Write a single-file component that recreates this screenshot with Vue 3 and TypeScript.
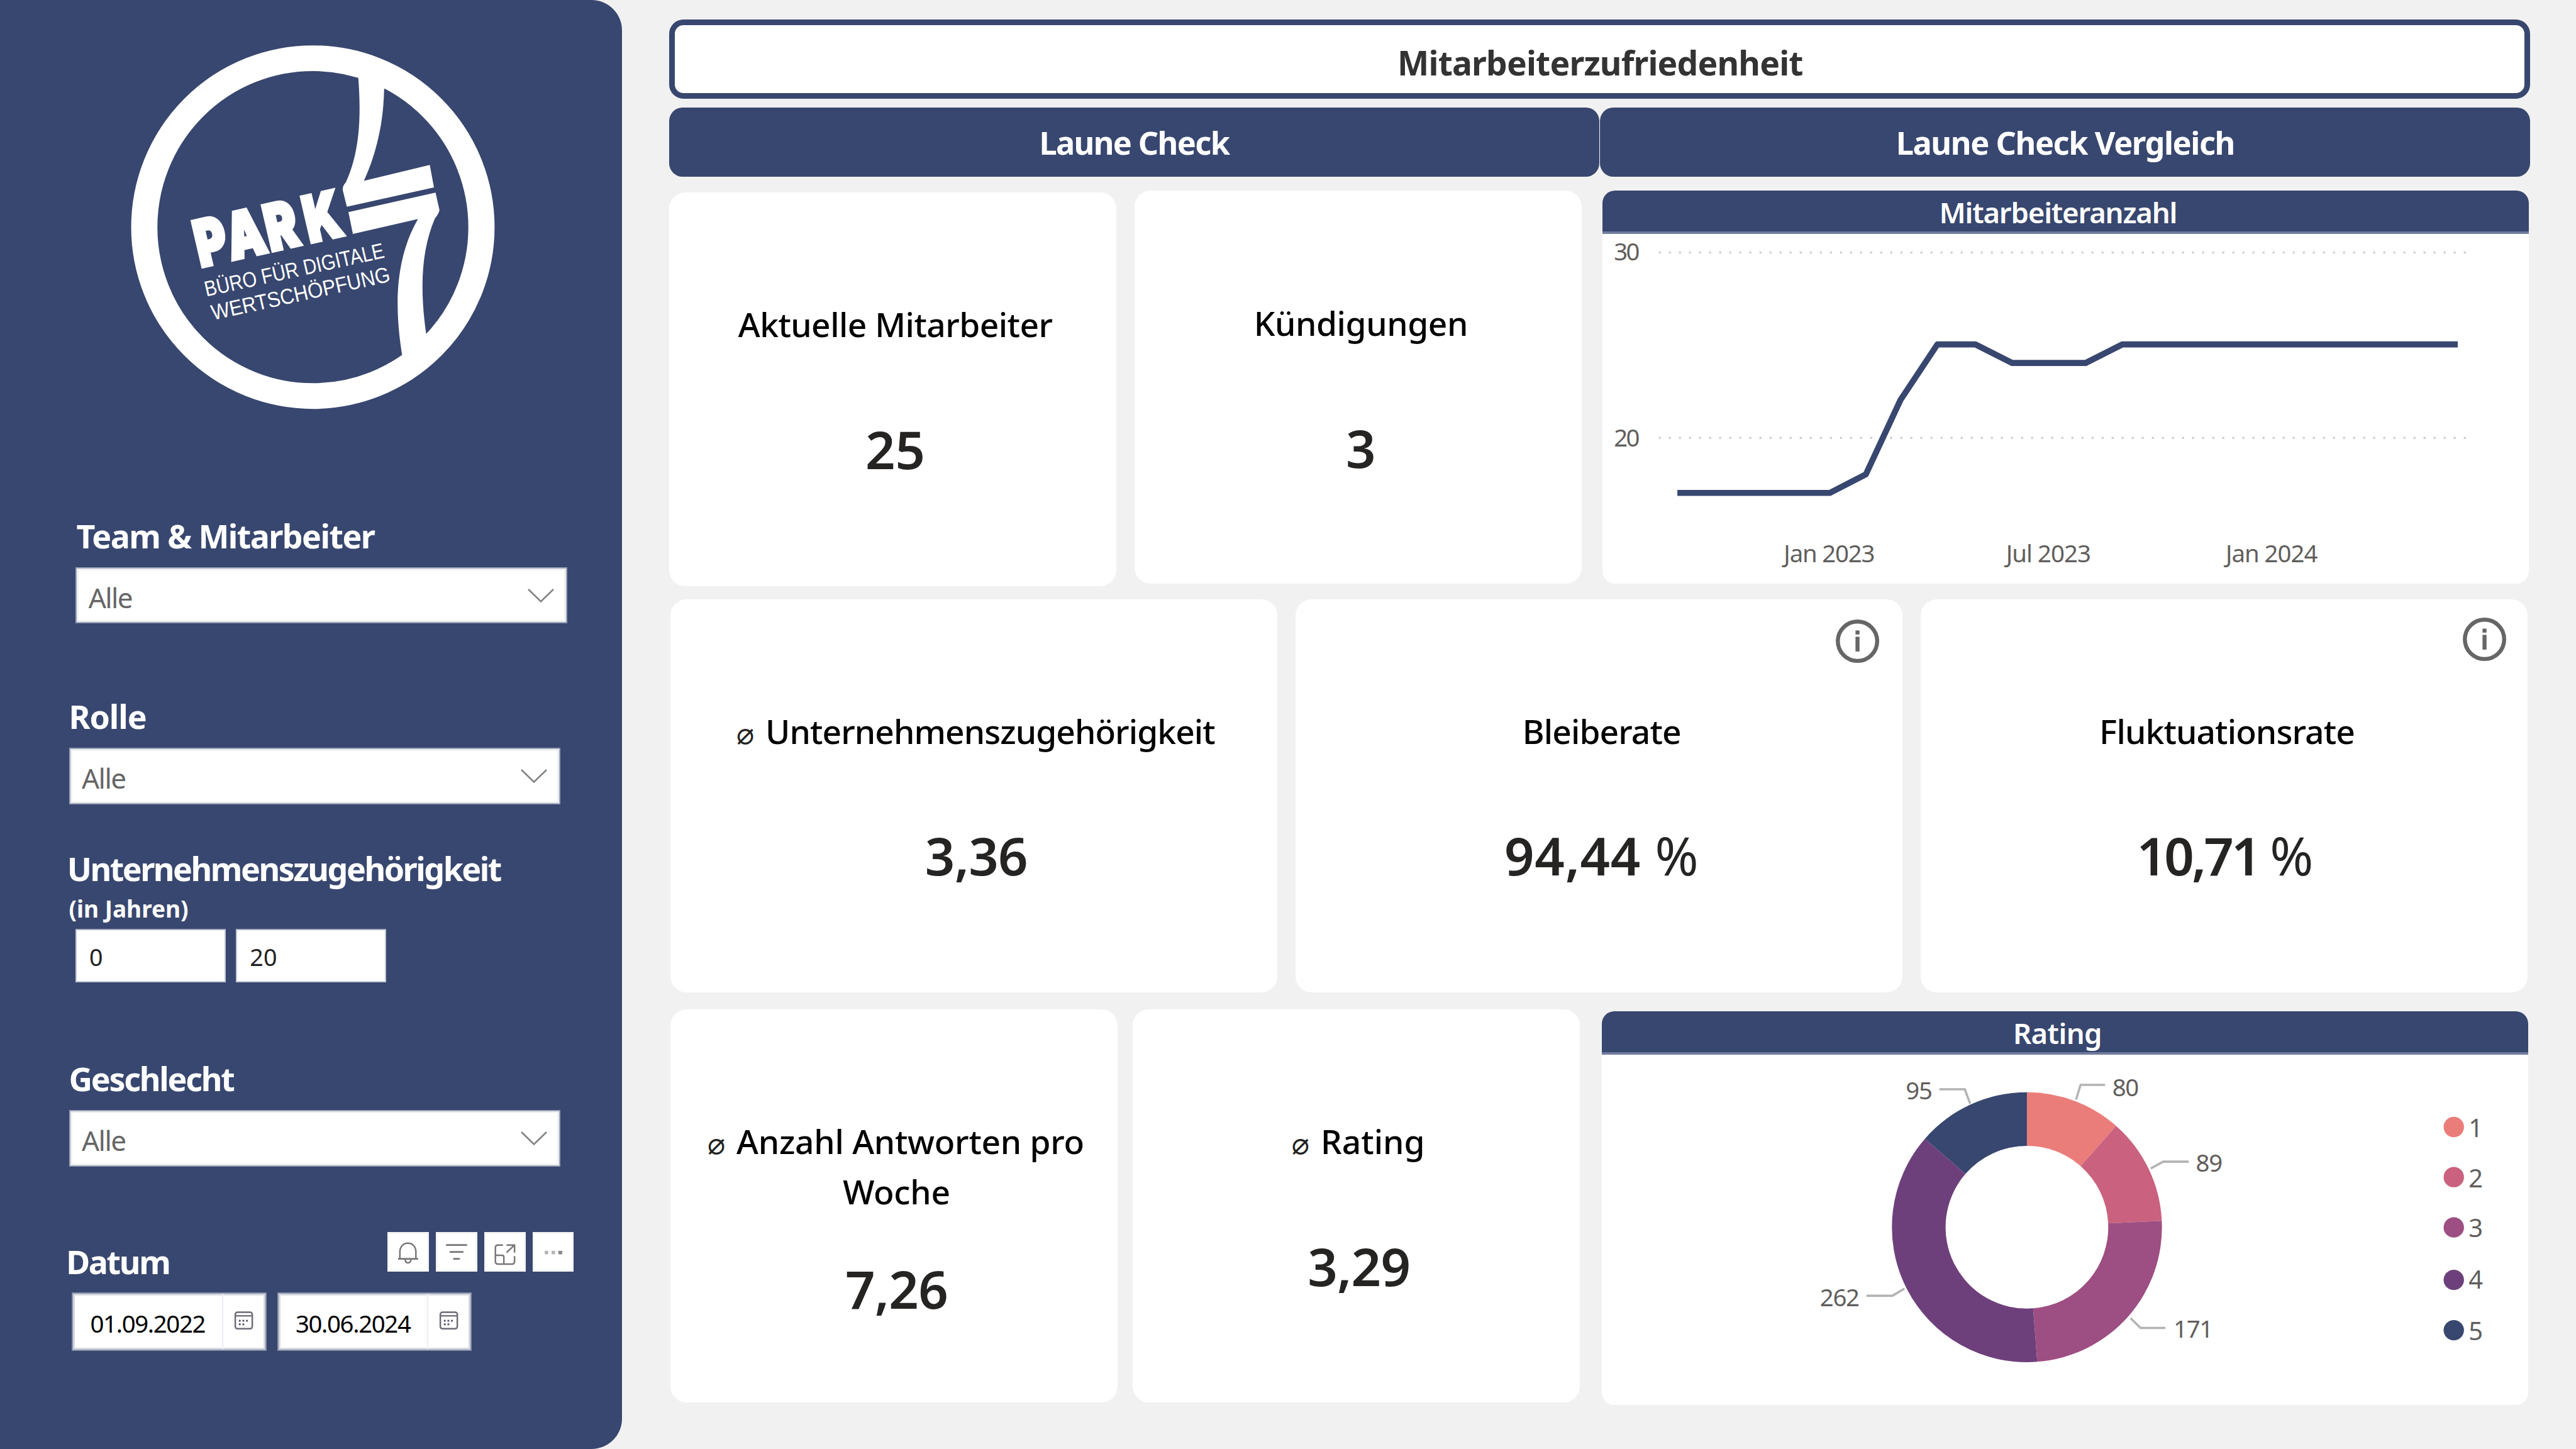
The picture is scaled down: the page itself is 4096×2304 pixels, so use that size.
<script setup lang="ts">
interface Kpi {
  label: string[]
  value: string
  unit?: string
  avg?: boolean
  info?: boolean
  cls: string
}

const rowOne: Kpi[] = [
  { label: ['Aktuelle Mitarbeiter'], value: '25', cls: 'staff' },
  { label: ['Kündigungen'], value: '3', cls: 'quits' },
]
const rowTwo: Kpi[] = [
  { label: ['Unternehmenszugehörigkeit'], value: '3,36', avg: true, cls: 'tenure' },
  { label: ['Bleiberate'], value: '94,44', unit: '%', info: true, cls: 'stay' },
  { label: ['Fluktuationsrate'], value: '10,71', unit: '%', info: true, cls: 'churn' },
]
const rowThree: Kpi[] = [
  { label: ['Anzahl Antworten pro', 'Woche'], value: '7,26', avg: true, cls: 'answers' },
  { label: ['Rating'], value: '3,29', avg: true, cls: 'score' },
]

const linePoints =
  '3750,1102 4091,1102 4171.5,1060.5 4249,894 4331.4,770 4416.4,770 4498.5,811.5 4663,811.5 4745,770 5495,770'

interface Slice {
  name: string
  count: number
  color: string
}
const slices: Slice[] = [
  { name: '1', count: 80, color: '#ea7d7a' },
  { name: '2', count: 89, color: '#c9617f' },
  { name: '3', count: 171, color: '#9d4e82' },
  { name: '4', count: 262, color: '#6e407b' },
  { name: '5', count: 95, color: '#38476f' },
]
const legendY = [2520.5, 2632.5, 2745, 2862.5, 2975]
const legendText = [2543, 2655, 2767, 2882, 2998]

const cx = 4533
const cy = 2744.6
const rOut = 302
const rIn = 182
const total = slices.reduce((s, d) => s + d.count, 0)

function point(r: number, a: number): string {
  return `${(cx + r * Math.sin(a)).toFixed(1)} ${(cy - r * Math.cos(a)).toFixed(1)}`
}
let run = 0
const arcs = slices.map((s) => {
  const a = (run / total) * Math.PI * 2
  run += s.count
  const b = (run / total) * Math.PI * 2
  const big = b - a > Math.PI ? 1 : 0
  return {
    color: s.color,
    d: `M${point(rOut, a)} A${rOut} ${rOut} 0 ${big} 1 ${point(rOut, b)} L${point(rIn, b)} A${rIn} ${rIn} 0 ${big} 0 ${point(rIn, a)} Z`,
  }
})

const callouts = [
  { text: '80', x: 4724, y: 2451, line: '4643,2459 4653,2426 4708,2426' },
  { text: '89', x: 4911, y: 2621, line: '4810,2613 4838,2598 4895,2598' },
  { text: '171', x: 4861, y: 2992, line: '4765,2948 4787,2970 4843,2970' },
  { text: '262', x: 4070, y: 2922, line: '4259,2882 4232,2898 4174,2898' },
  { text: '95', x: 4262, y: 2459, line: '4406,2468 4394,2436 4337,2436' },
]
</script>

<template>
  <div class="page">
    <aside class="side">
      <svg class="logo" viewBox="0 0 1568 1568" preserveAspectRatio="none">
        <ellipse cx="782.5" cy="779.5" rx="642.5" ry="658" fill="none" stroke="#fff" stroke-width="100" />
        <g fill="#fff">
          <path d="M955 190C966 330 965 480 908 605Q896 618 896 634L912 700L1244 625L1228 537L977 599C1030 480 1052 360 1054 242L1100 200L1000 150Z" />
          <path d="M918 721L1250 645L1265 713Q1262 728 1248 745C1195 870 1190 1020 1214 1194L1240 1230L1150 1300L1122 1275C1092 1080 1098 900 1183 748L935 806Z" />
          <text class="park" transform="translate(356 934) rotate(-12.8) scale(0.74 1)" x="-3 163 368 574">PARK</text>
          <text class="claim" transform="translate(376 1050) rotate(-12.6)" textLength="700" lengthAdjust="spacingAndGlyphs">BÜRO FÜR DIGITALE</text>
          <text class="claim" transform="translate(402 1142) rotate(-12.6)" textLength="696" lengthAdjust="spacingAndGlyphs">WERTSCHÖPFUNG</text>
        </g>
      </svg>

      <section class="field team">
        <h3>Team &amp; Mitarbeiter</h3>
        <div class="drop">
          <span>Alle</span>
          <svg viewBox="0 0 64 36"><path d="M3 3L32 31L61 3" /></svg>
        </div>
      </section>
      <section class="field role">
        <h3>Rolle</h3>
        <div class="drop">
          <span>Alle</span>
          <svg viewBox="0 0 64 36"><path d="M3 3L32 31L61 3" /></svg>
        </div>
      </section>
      <section class="field years">
        <h3>Unternehmenszugehörigkeit</h3>
        <h4>(in Jahren)</h4>
        <div class="range">
          <div class="num">0</div>
          <div class="num">20</div>
        </div>
      </section>
      <section class="field gender">
        <h3>Geschlecht</h3>
        <div class="drop">
          <span>Alle</span>
          <svg viewBox="0 0 64 36"><path d="M3 3L32 31L61 3" /></svg>
        </div>
      </section>
      <section class="field dates">
        <div class="head">
          <h3>Datum</h3>
          <div class="tools">
            <div class="tool">
              <svg viewBox="0 0 93 89">
                <path d="M28 60V45C28 33 35 25 46 25S64 33 64 45V60" />
                <path d="M24 60H69" stroke-width="4" />
                <path d="M40 61Q40 69 46 69T53 61" />
              </svg>
            </div>
            <div class="tool">
              <svg viewBox="0 0 93 89">
                <path d="M23 29H70M31 44.500H62M39 60H54" stroke-width="4" />
              </svg>
            </div>
            <div class="tool">
              <svg viewBox="0 0 93 89">
                <path d="M42 29H31Q25 29 25 35V66Q25 72 31 72H62Q68 72 68 66V54" />
                <path d="M50 29H68V46M67 30L50 46M25 52H40Q44 52 44 56V72" />
              </svg>
            </div>
            <div class="tool">
              <svg viewBox="0 0 93 89">
                <g fill="#8a8a8a" stroke="none">
                  <rect x="27" y="42" width="8" height="8" rx="2" fill="#b5b5b5" />
                  <rect x="42.500" y="42" width="8" height="8" rx="2" fill="#b5b5b5" />
                  <rect x="57.500" y="42" width="9" height="8" rx="2" />
                </g>
              </svg>
            </div>
          </div>
        </div>
        <div class="range">
          <div v-for="d in ['01.09.2022', '30.06.2024']" :key="d" class="date">
            <span>{{ d }}</span>
            <div class="cal">
              <svg viewBox="0 0 44 46">
                <rect x="3" y="5" width="38" height="37" rx="5" fill="none" stroke="#6b6b78" stroke-width="3.500" />
                <path d="M4 13H40" stroke="#77777f" stroke-width="3.500" />
                <g fill="#55506c">
                  <rect x="11" y="22" width="4" height="4" />
                  <rect x="19" y="22" width="4" height="4" />
                  <rect x="27" y="22" width="4" height="4" />
                  <rect x="11" y="30" width="4" height="4" />
                  <rect x="19" y="30" width="4" height="4" />
                </g>
              </svg>
            </div>
          </div>
        </div>
      </section>
    </aside>

    <main class="main">
      <h1 class="title">Mitarbeiterzufriedenheit</h1>
      <nav class="bars">
        <div class="bar">Laune Check</div>
        <div class="bar wide">Laune Check Vergleich</div>
      </nav>

      <div class="row one">
        <article v-for="k in rowOne" :key="k.cls" class="card" :class="k.cls">
          <div class="label"><div v-for="l in k.label" :key="l">{{ l }}</div></div>
          <div class="value">{{ k.value }}</div>
        </article>
        <article class="panel">
          <h2>Mitarbeiteranzahl</h2>
          <svg class="chart" viewBox="3582.500 523 2072.500 782">
            <g stroke="#d0cfce" stroke-width="5" stroke-dasharray="4.500 18">
              <path d="M3708.500 564.500H5519" />
              <path d="M3708.500 979H5519" />
            </g>
            <g class="axis">
              <text x="3608" y="582" textLength="58">30</text>
              <text x="3608" y="998" textLength="58">20</text>
              <text x="3988" y="1257" textLength="204">Jan 2023</text>
              <text x="4485" y="1257" textLength="190">Jul 2023</text>
              <text x="4976" y="1257" textLength="206">Jan 2024</text>
            </g>
            <polyline :points="linePoints" fill="none" stroke="#38476f" stroke-width="13.500" stroke-linejoin="round" />
          </svg>
        </article>
      </div>

      <div class="row two">
        <article v-for="k in rowTwo" :key="k.cls" class="card" :class="k.cls">
          <svg v-if="k.info" class="info" viewBox="0 0 100 100">
            <circle cx="50" cy="50" r="44" fill="none" stroke="#666" stroke-width="9" />
            <rect x="45.500" y="26" width="9" height="9" fill="#666" />
            <rect x="45.500" y="40" width="9" height="33" fill="#666" />
          </svg>
          <div class="label">
            <div v-for="l in k.label" :key="l"><span v-if="k.avg" class="avg">⌀</span>{{ l }}</div>
          </div>
          <div class="value">{{ k.value }}<span v-if="k.unit" class="unit">&nbsp;{{ k.unit }}</span></div>
        </article>
      </div>

      <div class="row three">
        <article v-for="k in rowThree" :key="k.cls" class="card" :class="k.cls">
          <div class="label">
            <div v-for="(l, i) in k.label" :key="l"><span v-if="k.avg && i === 0" class="avg">⌀</span>{{ l }}</div>
          </div>
          <div class="value">{{ k.value }}</div>
        </article>
        <article class="panel rating">
          <h2>Rating</h2>
          <svg class="chart" viewBox="3582.500 2358.600 2072.500 782.400">
            <path v-for="a in arcs" :key="a.color" :d="a.d" :fill="a.color" />
            <g v-for="c in callouts" :key="c.text">
              <polyline :points="c.line" fill="none" stroke="#b3b3b3" stroke-width="5" />
              <text class="tick" :x="c.x" :y="c.y">{{ c.text }}</text>
            </g>
            <g v-for="(s, i) in slices" :key="s.name">
              <circle cx="5488" :cy="legendY[i]" r="22.800" :fill="s.color" />
              <text class="key" x="5521" :y="legendText[i]">{{ s.name }}</text>
            </g>
          </svg>
        </article>
      </div>
    </main>
  </div>
</template>

<style>
html {
  font-size: calc(100vw / 57.6);
}
body {
  margin: 0;
  overflow: hidden;
}
</style>

<style scoped>
.page {
  display: flex;
  width: 57.6rem;
  height: 32.4rem;
  overflow: hidden;
  background: #f1f1f1;
  font-family: 'Noto Sans', 'Open Sans', sans-serif;
  box-sizing: border-box;
}
.page * {
  box-sizing: border-box;
}
h1, h2, h3, h4 {
  margin: 0;
}

/* sidebar */
.side {
  display: flex;
  flex-direction: column;
  flex: none;
  width: 13.91rem;
  height: 32.4rem;
  background: #38476f;
  border-radius: 0 0.68rem 0.68rem 0;
  color: #fff;
}
.logo {
  flex: none;
  width: 9.2rem;
  height: 9rem;
  margin: 0.6rem 0 0 2.4rem;
}
.park {
  font: 900 246px Inter, sans-serif;
  stroke: #fff;
  stroke-width: 15px;
}
.claim {
  font: 400 84px 'Liberation Sans', sans-serif;
}
.field h3 {
  height: 1rem;
  padding-top: 0.025rem;
  font-size: 0.73rem;
  line-height: 1rem;
  font-weight: 700;
  white-space: nowrap;
}
.field h4 {
  font-size: 0.52rem;
  line-height: 0.7rem;
  margin: 0.065rem 0 0.1rem 1.54rem;
  font-weight: 700;
}
.team { margin-top: 1.867rem; }
.team h3 { margin-left: 1.71rem; letter-spacing: -0.0222rem; }
.team .drop { margin-left: 1.69rem; }
.role { margin-top: 1.567rem; }
.role h3 { margin-left: 1.54rem; letter-spacing: -0.0151rem; }
.years { margin-top: 0.913rem; }
.years h3 { margin-left: 1.5rem; letter-spacing: -0.0351rem; }
.gender { margin-top: 1.635rem; }
.gender h3 { margin-left: 1.54rem; letter-spacing: -0.0318rem; }
.dates { margin-top: 1.607rem; }
.dates h3 { margin-left: 1.48rem; letter-spacing: -0.0332rem; }

.drop {
  display: flex;
  justify-content: space-between;
  width: 10.99rem;
  height: 1.27rem;
  margin: 0.213rem 0 0 1.54rem;
  padding: 0.07rem 0.25rem 0 0.26rem;
  background: #fff;
  border: 0.04rem solid #9aa3b9;
  box-shadow: inset 0 0 0 0.04rem #efefef;
  color: #666;
  font-size: 0.62rem;
  line-height: 1.18rem;
  letter-spacing: -0.022rem;
}
.team .drop {
  height: 1.26rem;
}
.drop svg {
  width: 0.62rem;
  height: 0.35rem;
  margin-top: 0.37rem;
}
.drop path {
  fill: none;
  stroke: #858585;
  stroke-width: 4;
}
.range {
  display: flex;
}
.num {
  width: 3.36rem;
  height: 1.2rem;
  padding: 0.05rem 0 0 0.28rem;
  background: #fff;
  border: 0.04rem solid #c3c8d4;
  border-top-color: #a6aec2;
  color: #222;
  font-size: 0.53rem;
  line-height: 1.12rem;
}
.years .range {
  margin-left: 1.69rem;
  gap: 0.23rem;
}
.head {
  display: flex;
  height: 1rem;
}
.dates h3 {
  width: 7.187rem;
}
.tools {
  display: flex;
  gap: 0.154rem;
  margin-top: -0.14rem;
}
.tool {
  width: 0.926rem;
  height: 0.89rem;
  background: #fff;
  box-shadow: inset 0 0 0 0.04rem #f4f4f4;
}
.tool svg {
  display: block;
  width: 100%;
  height: 100%;
  fill: none;
  stroke: #777;
  stroke-width: 3.5;
}
.dates .range {
  margin: 0.213rem 0 0 1.61rem;
  gap: 0.24rem;
}
.date {
  display: flex;
  width: 4.35rem;
  height: 1.3rem;
  background: #fff;
  border: 0.04rem solid #8790a8;
  box-shadow: inset 0 0 0 0.04rem #d2d5dd;
  color: #000;
  font-size: 0.54rem;
  line-height: 1.24rem;
  letter-spacing: -0.0191rem;
}
.date span {
  width: 3.35rem;
  padding: 0.03rem 0 0 0.38rem;
  border-right: 0.04rem solid #ececf2;
}
.cal svg {
  display: block;
  width: 0.44rem;
  height: 0.46rem;
  margin: 0.36rem 0 0 0.24rem;
}

/* main area */
.main {
  flex: none;
  width: 43.69rem;
  padding: 0.44rem 0 0 1.05rem;
}
.title {
  width: 41.62rem;
  height: 1.77rem;
  background: #fff;
  border: 0.14rem solid #38476f;
  border-radius: 0.32rem;
  padding-top: 0.1rem;
  padding-left: 0.02rem;
  color: #333;
  text-align: center;
  font-size: 0.75rem;
  line-height: 1.49rem;
  letter-spacing: -0.0117rem;
}
.bars {
  display: flex;
  gap: 0.02rem;
  margin-top: 0.2rem;
}
.bar {
  width: 20.8rem;
  height: 1.54rem;
  padding-top: 0.03rem;
  border-radius: 0.3rem;
  background: #38476f;
  color: #fff;
  text-align: center;
  font-size: 0.71rem;
  font-weight: 700;
  line-height: 1.51rem;
  letter-spacing: -0.0231rem;
}
.bar.wide {
  letter-spacing: -0.02rem;
}
.row {
  display: flex;
  align-items: flex-start;
}
.row.one {
  height: 8.84rem;
  margin-top: 0.31rem;
}
.row.two {
  height: 8.79rem;
  margin: 0.305rem 0 0 0.026rem;
}
.row.three {
  margin: 0.382rem 0 0 0.026rem;
}
.card {
  position: relative;
  width: 10rem;
  height: 8.79rem;
  padding: 2.39rem 0 0 0.12rem;
  border-radius: 0.36rem;
  background: #fff;
  text-align: center;
}
.label {
  color: #000;
  font-size: 0.75rem;
  font-weight: 530;
  line-height: 1.12rem;
  white-space: nowrap;
}
.value {
  margin-top: 1.415rem;
  color: #252423;
  font-size: 1.17rem;
  font-weight: 570;
  line-height: 1.6rem;
}
.unit {
  font-weight: 440;
}
.avg {
  display: inline-block;
  width: 0.62rem;
  color: #222;
  text-align: left;
  text-indent: -0.03rem;
  font: 400 0.66rem 'DejaVu Sans', sans-serif;
  line-height: 0.66rem;
}
.staff { margin-top: 0.05rem; }
.staff .label { letter-spacing: -0.008rem; }
.quits { margin-left: 0.41rem; padding-top: 2.41rem; }
.quits .label { letter-spacing: -0.006rem; }
.row.two .card {
  width: 13.57rem;
}
.tenure .label { letter-spacing: -0.0132rem; }
.stay { margin-left: 0.413rem; }
.stay .label { letter-spacing: -0.0128rem; }
.stay .value { letter-spacing: 0.01rem; }
.churn { margin-left: 0.413rem; }
.churn .label { letter-spacing: -0.0124rem; }
.churn .value { margin-left: -0.14rem; letter-spacing: -0.055rem; }
.answers .label { letter-spacing: -0.004rem; }
.answers .value { margin-top: 0.8rem; }
.answers .value,
.score .value,
.tenure .value { letter-spacing: -0.01rem; }
.score { margin-left: 0.34rem; }
.info {
  position: absolute;
  top: 0.43rem;
  right: 0.5rem;
  width: 1rem;
  height: 1rem;
}
.churn .info {
  top: 0.39rem;
  right: 0.46rem;
}
.panel {
  width: 20.725rem;
  height: 8.79rem;
  margin-left: 0.455rem;
  border-radius: 0.28rem;
  background: #fff;
  overflow: hidden;
}
.panel.rating {
  margin: 0.043rem 0 0 0.487rem;
}
.panel h2 {
  height: 0.97rem;
  padding-right: 0.34rem;
  background: #38476f;
  border-bottom: 0.07rem solid #707c9c;
  color: #fff;
  text-align: center;
  font-size: 0.64rem;
  font-weight: 600;
  line-height: 0.98rem;
  letter-spacing: -0.0168rem;
}
.rating h2 {
  letter-spacing: -0.009rem;
}
.chart {
  display: block;
  width: 20.725rem;
  height: 7.82rem;
}
.axis text,
.tick {
  fill: #605e5c;
  font-size: 54px;
}
.tick {
  letter-spacing: -1.9px;
}
.key {
  fill: #605e5c;
  font-size: 56px;
}
</style>
